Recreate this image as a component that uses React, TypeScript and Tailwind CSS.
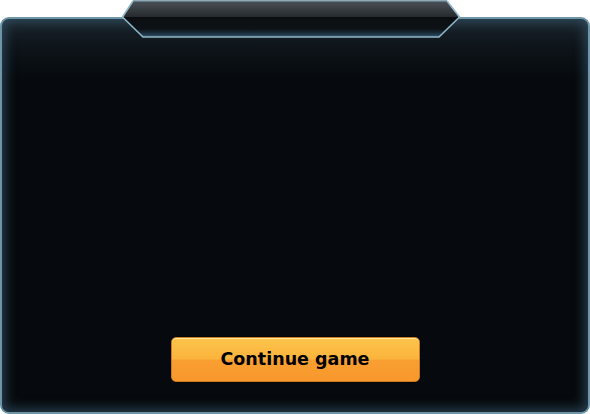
export default function App() {
  return (
    <div className="relative w-[590px] h-[414px] bg-white overflow-hidden" style={{ fontFamily: '"DejaVu Sans", Verdana, sans-serif' }}>
      <div className="mt-[17px] h-[397px] w-[590px] rounded-[9px] border-2 border-[#6f95a8] bg-[#060a0e] shadow-[inset_0_0_12px_3px_rgba(60,100,125,0.6)] bg-[linear-gradient(to_bottom,#1b252c_0px,#0d1318_30px,#060a0e_60px,#060a0e_100%)] flex flex-col items-center justify-end pb-[30px]">
        <button className="w-[249px] h-[45px] rounded-[5px] border border-[#c97a1e] bg-[linear-gradient(to_bottom,#fdc44c_0%,#fbb43c_48%,#f99f32_52%,#f8982d_100%)] shadow-[inset_0_1px_0_rgba(255,236,170,0.9),0_0_2px_rgba(0,0,0,0.6)] text-[17.5px] font-bold text-black">
          Continue game
        </button>
      </div>
      <svg className="absolute left-0 top-0" width="590" height="40" viewBox="0 0 590 40">
        <defs>
          <linearGradient id="tabTop" x1="0" y1="0" x2="0" y2="1">
            <stop offset="0" stopColor="#4a5156" />
            <stop offset="0.45" stopColor="#3a3f44" />
            <stop offset="1" stopColor="#25292d" />
          </linearGradient>
          <linearGradient id="tabBot" x1="0" y1="0" x2="0" y2="1">
            <stop offset="0" stopColor="#0b0e11" />
            <stop offset="0.6" stopColor="#0d1216" />
            <stop offset="0.85" stopColor="#1e3444" />
            <stop offset="1" stopColor="#34566a" />
          </linearGradient>
        </defs>
        <path d="M133 1 L447 1 L459 17 L123 17 Z" fill="url(#tabTop)" />
        <path d="M123 17 L459 17 L439 37 L143 37 Z" fill="url(#tabBot)" />
        <path d="M133 1 L447 1" stroke="#6a8a9a" strokeWidth="1.5" fill="none" />
        <path d="M133 1 L122.5 17 L143 37 L439 37 L459.5 17 L447 1" stroke="#8fb6c8" strokeWidth="1.6" fill="none" strokeLinejoin="round" />
      </svg>
    </div>
  );
}
